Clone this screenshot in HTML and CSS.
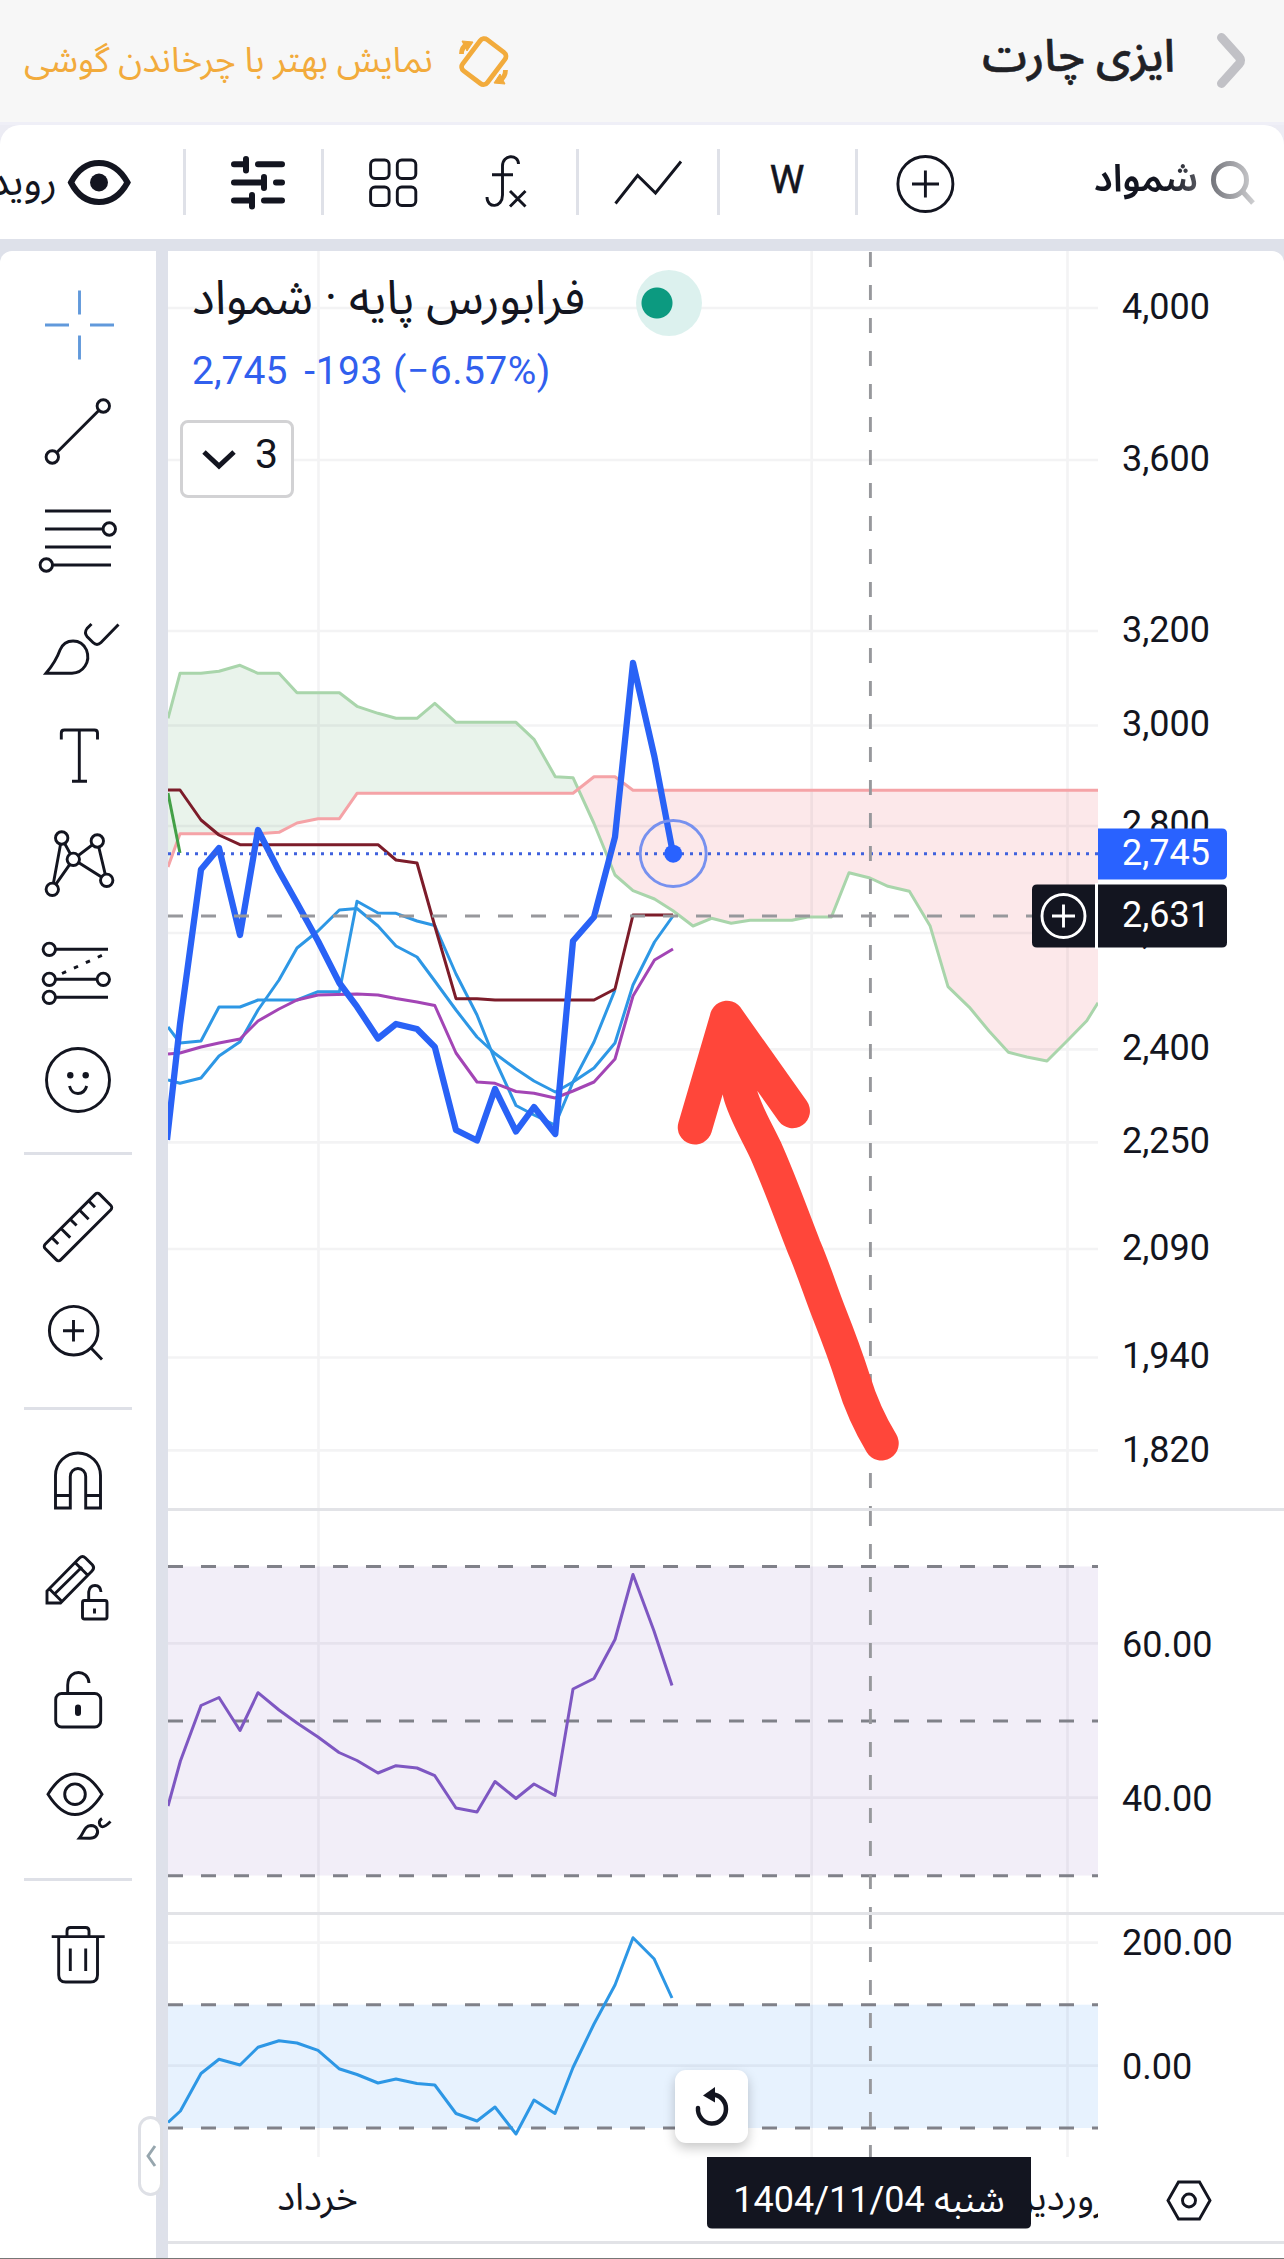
FILE: index.html
```html
<!DOCTYPE html>
<html lang="fa">
<head>
<meta charset="utf-8">
<title>ایزی چارت</title>
<link rel="stylesheet" href="styles.css">
</head>
<body>
<div class="app">
  <header class="header">
    <div class="rotate-hint">
      <span class="rotate-text" dir="rtl">نمایش بهتر با چرخاندن گوشی</span>
      <svg class="rotate-icon" viewBox="459 36 50 52"><rect x="468" y="42" width="31" height="39" rx="5" transform="rotate(37 483.500 62)"/><path d="M461.500 54Q461.500 47 467.500 44M505.500 70Q505.500 77 499.500 81"/><path class="solid" d="M462 41L473 42L467 51ZM505 84L494 83L500 74Z"/></svg>
    </div>
    <div class="page-title">
      <h1 dir="rtl">ایزی چارت</h1>
      <svg class="back" viewBox="1210 30 40 64"><path d="M1220.500 38.500L1238 58Q1241 61.500 1238 65L1220.500 84.500"/></svg>
    </div>
  </header>

  <div class="toolbar-wrap">
  <nav class="toolbar">
    <div class="cell events"><span class="events-text" dir="rtl">رویداد</span><svg viewBox="66 157 66 51"><path class="w6" d="M71 182.500C78 169 88 163 99 163S120 169 127.500 182.500C120 196 110 202 99 202S78 196 71 182.500Z"/><circle class="dot" cx="99" cy="182.500" r="9"/></svg></div>
    <i class="sep"></i>
    <div class="cell"><svg width="135" height="114" viewBox="186 125 135 114"><path class="w6" d="M234 164.300H246M246 159V170.500M258 164.300H282M234 182.500H264M264 177V188M276 182.500H282M234 200.500H252M252 195V206.500M264 200.500H282"/></svg></div>
    <i class="sep"></i>
    <div class="cell"><svg width="252" height="114" viewBox="324 125 252 114"><rect x="370.600" y="160" width="18.500" height="18.500" rx="4.500"/><rect x="397.300" y="160" width="18.500" height="18.500" rx="4.500"/><rect x="370.600" y="187" width="18.500" height="18.500" rx="4.500"/><rect x="397.300" y="187" width="18.500" height="18.500" rx="4.500"/><path d="M518.500 164C518.500 154 502.500 154 502.500 166V195C502.500 208 487 209 487 197M492 174.700H513M510 191L525.500 206.500M525.500 191L510 206.500"/></svg></div>
    <i class="sep"></i>
    <div class="cell"><svg width="138" height="114" viewBox="579 125 138 114"><path d="M615.500 203.500L637.600 175.500L655.500 193L681 161.500"/></svg></div>
    <i class="sep"></i>
    <div class="cell interval">W</div>
    <i class="sep"></i>
    <div class="cell search">
      <svg width="136" height="114" viewBox="858 125 136 114"><circle cx="925.400" cy="184" r="27.500"/><path d="M912 184H939M925.400 170.500V197.500"/></svg>
      <div class="symbol"><span dir="rtl">شمواد</span><svg class="lens" width="44" height="50" viewBox="1211 157 44 50"><circle cx="1230" cy="180" r="16.500"/><path d="M1243 192L1253 203"/></svg></div>
    </div>
  </nav>
  </div>

  <main class="workspace">
    <aside class="tools">
      <svg height="126" viewBox="0 251 156 126"><path class="active" d="M79.500 290.500V314.500M79.500 335.500V359.500M45 325H69M90 325H114"/></svg>
      <svg height="110" viewBox="0 377 156 110"><path d="M52.300 457L103.300 406"/><circle class="node" cx="52.300" cy="457" r="6.200"/><circle class="node" cx="103.300" cy="406" r="6.200"/></svg>
      <svg height="108" viewBox="0 487 156 108"><path d="M45 511H111M45 529H103M45 547H111M52 565H111"/><circle class="node" cx="109.300" cy="529" r="6.200"/><circle class="node" cx="46.300" cy="565" r="6.200"/></svg>
      <svg height="105" viewBox="0 595 156 105"><path d="M46 673.300C53 665 57.500 657 60 650C65 638 81 638 86.500 650C91 662 83 673 72 673.300ZM91.500 624L87 628.500Q84 632.500 87 636.500L93 642.500Q97 646.500 101 642.500L118.500 624.500"/></svg>
      <svg height="110" viewBox="0 700 156 110"><path d="M61.300 739.500V733Q61.300 730 64.300 730H94.500Q97.500 730 97.500 733V739.500M79.300 730V781M72 781.300H87"/></svg>
      <svg height="110" viewBox="0 810 156 110"><path d="M73.300 859.300L61.700 838L52.300 889.300L73.300 859.300L97.300 841L106.700 880.300Z"/><circle class="node" cx="61.700" cy="838" r="6.200"/><circle class="node" cx="97.300" cy="841" r="6.200"/><circle class="node" cx="73.300" cy="859.300" r="6.200"/><circle class="node" cx="52.300" cy="889.300" r="6.200"/><circle class="node" cx="106.700" cy="880.300" r="6.200"/></svg>
      <svg height="108" viewBox="0 920 156 108"><path d="M49 949.300H108M49 979.300H103M49 997.300H108"/><path stroke-dasharray="4.500 8.600" d="M62 973.500L105 954"/><circle class="node" cx="49.300" cy="949.300" r="6.200"/><circle class="node" cx="49.300" cy="979.300" r="6.200"/><circle class="node" cx="103.300" cy="979.300" r="6.200"/><circle class="node" cx="49.300" cy="997.300" r="6.200"/></svg>
      <svg height="102" viewBox="0 1028 156 102"><circle cx="78" cy="1080" r="31.500"/><circle class="dot" cx="70.300" cy="1075.300" r="3.200"/><circle class="dot" cx="85.700" cy="1075.300" r="3.200"/><path d="M69.500 1086Q71.500 1093.500 78 1093.500T86.700 1086"/></svg>
      <hr>
      <svg height="115" viewBox="0 1170 156 115"><g transform="translate(78 1227) rotate(-45)"><rect x="-38.500" y="-11" width="77" height="22" rx="3"/><path d="M-26-11V-2M-13-11V2M0-11V-2M13-11V2M26-11V-2"/></g></svg>
      <svg height="100" viewBox="0 1285 156 100"><circle cx="73.700" cy="1330.700" r="24.300"/><path d="M91 1348L102 1359.500M63 1330.700H84M73.500 1320V1341.500"/></svg>
      <hr>
      <svg height="105" viewBox="0 1425 156 105"><path d="M55.500 1508V1475.500A22.500 22.500 0 0 1 100.500 1475.500V1508H85.700V1476.500A7.700 8 0 0 0 70.300 1476.500V1508ZM55.500 1495.500H70.300M85.700 1495.500H100.500"/></svg>
      <svg height="110" viewBox="0 1530 156 110"><path d="M47 1603V1591L79.500 1558Q82.500 1555 85.500 1558L92.500 1565Q95 1568 92 1571L60.500 1603ZM49 1588.500L62 1601.500M54.500 1594L82 1567M75 1562.500L87.500 1575"/><rect x="82.500" y="1600.500" width="24.500" height="18.500" rx="2"/><path d="M88.700 1600V1592Q89.500 1585.500 95 1585.500Q100.500 1585.500 101 1592M94.500 1608.500V1613.500"/></svg>
      <svg height="110" viewBox="0 1640 156 110"><rect x="55.700" y="1693.500" width="45" height="33.500" rx="6"/><path d="M67.700 1693V1685C68 1675.500 74 1672.500 78.500 1672.500S88.500 1675.500 89 1683"/><rect class="dot" x="75" y="1704.500" width="6" height="11.500" rx="3"/></svg>
      <svg height="106" viewBox="0 1750 156 106"><path d="M48 1794.200C56 1781 66 1774 75 1774S94 1781 102 1794.200C94 1807 84 1814.500 75 1814.500S56 1807 48 1794.200Z"/><circle cx="75" cy="1794.200" r="10.300"/><path d="M79.500 1838C84 1833 84 1826 91 1825.500C97 1825.500 99.500 1832 96 1836Q94 1838.200 90 1838.200ZM102 1818.500C98 1821 99 1825 101.500 1826.500Q104 1828 110.500 1821.500"/></svg>
      <hr>
      <svg height="104" viewBox="0 1896 156 104"><path d="M51.700 1936.600H104.700M67 1936V1931Q67 1927.500 70.500 1927.500H85.500Q89 1927.500 89 1931V1936M58.700 1937V1975Q58.700 1982 65.700 1982H90.500Q97.500 1982 97.500 1975V1937M70.300 1948.500V1971M85.700 1948.500V1971"/></svg>
      <div class="collapse"><svg width="12" height="24" viewBox="0 0 12 24"><path d="M10 2L3 12L10 22"/></svg></div>
    </aside>

    <section class="chart">
      <svg class="pane" height="1257" viewBox="168 251 1116 1257">
        <clipPath id="plot"><rect x="168" y="251" width="930" height="1257"/></clipPath>
        <g clip-path="url(#plot)">
          <path class="cloud-up" d="M168 718.300L180 673.300L201 673.300L219 671.300L240 665.300L258 673.300L279 673.300L297 692.700L339.400 692.700L357 706.300L378 713.300L396 718.300L417 718.300L434.800 703.300L456 722.300L516 722.300L534 739.300L555.300 776.700L573 777.700L578 789L573 793.300L357 793.300L339.400 818.700L318 818.700L297 823L279 832.300L258 833.700L180 833.700L168 867Z"/>
          <path class="cloud-down" d="M578 789L594 776.700L615 776.700L633 790.300H1098V1002.700L1086.800 1020.700L1068 1040L1047 1061L1026.900 1057L1008.400 1052.300L989 1031L969.400 1007.300L948 986.700L930 925.700L909.400 891.300L888 886.300L870 878L849 872.700L831.400 917H807.600L792 920.300H750L731.200 923.300L711.500 918.300L693 926L673 910.700L654.500 899L633 890.700L615 875L594 823.500Z"/>
          <path class="grid" d="M168 308H1098M168 460H1098M168 631H1098M168 725.500H1098M168 826H1098M168 933H1098M168 1049.300H1098M168 1142.300H1098M168 1249H1098M168 1357.500H1098M168 1450.300H1098M318.500 251V1508M811.700 251V1508M1067.500 251V1508"/>
          <path class="line span-a" d="M168 718.300L180 673.300L201 673.300L219 671.300L240 665.300L258 673.300L279 673.300L297 692.700L339.400 692.700L357 706.300L378 713.300L396 718.300L417 718.300L434.800 703.300L456 722.300L516 722.300L534 739.300L555.300 776.700L573 777.700L594 823.500L615 875L633 890.700L654.500 899L673 910.700L693 926L711.500 918.300L731.200 923.300L750 920.300H792L807.600 917H831.400L849 872.700L870 878L888 886.300L909.400 891.300L930 925.700L948 986.700L969.400 1007.300L989 1031L1008.400 1052.300L1026.900 1057L1047 1061L1068 1040L1086.800 1020.700L1098 1002.700"/>
          <path class="line span-b" d="M168 867L180 833.700H258L279 832.300L297 823L318 818.700H339.400L357 793.300H573L594 776.700H615L633 790.300H1098"/>
          <path class="line lagging" d="M168 793L180 853"/>
          <path class="line sky" d="M168 1027L180 1043L201 1041L219 1007H240L258 1000H297L318 991.700H339.400L357 901.300L378 913L396 913.300L417 921L434.800 925.500L456 974L477 1015L495 1060L516 1105.500L534 1115L555 1125L573 1082L594 1042L615 990"/>
          <path class="line sky" d="M168 1080L180 1083.300L201 1078L219 1056L240 1041.700L258 1010L279 980L297 948L318 931L339.400 910L357 908.500L378 926L396 946L417 957L434.800 981L456 1010L477 1037L495 1053.500L516 1069L534 1081L555.300 1092L573 1082L594 1068L615 1043L633 985L654.500 942L673 916"/>
          <path class="line maroon" d="M168 790H180L201 820L219 835L240 844.700H378L396 860L417 863L434.800 926L456 998.700H477L495 1000H594L615 989L633 915H673"/>
          <path class="line violet" d="M168 1054L180 1053L201 1047L219 1043L240 1039L258 1021L279 1009L297 1000L318 995L357 994L378 995L396 998.500L417 1002L434.800 1005.500L456 1053L477 1082L495 1083.300L516 1091.500L534 1093.300L555 1098L573 1091L594 1082L615 1059L633 996L654.500 960L673 949"/>
          <path class="line price" d="M167 1140L180 1024L201 869.500L219 848L240 935L258 830L279 871L297 903L318 941L339.400 983L357 1006.700L378 1038.500L396 1024L417 1029L434.800 1047L456 1130L477 1140.500L495 1089L516 1131.500L534 1107L555.300 1134L573 941L594 917L615 837L633 663L654.500 757L673 853.700"/>
          <path class="last-price" d="M168 853.700H1098"/>
          <circle class="halo" cx="673.200" cy="853.500" r="33"/><circle class="last-dot" cx="673.200" cy="853.700" r="9"/>
          <path class="cross" d="M168 916H1098M870.400 252V1508"/>
          <path class="arrow" d="M881.500 1443.300C868 1421 860 1402 853.300 1380C846 1357 838.500 1337 829 1313C820 1290 813.500 1269 804 1247C791 1214 781 1185 765.500 1150C756 1130 744 1110 740 1093C736 1072 729 1040 727 1018M695 1127.300L727 1018.300L792.700 1111"/>
        </g>
        <g class="labels">
          <text x="1122" y="318.500">4,000</text><text x="1122" y="471">3,600</text><text x="1122" y="642">3,200</text><text x="1122" y="736">3,000</text><text x="1122" y="836">2,800</text><text x="1122" y="944">2,600</text><text x="1122" y="1060">2,400</text><text x="1122" y="1153">2,250</text><text x="1122" y="1260">2,090</text><text x="1122" y="1368">1,940</text><text x="1122" y="1461.500">1,820</text>
          <path class="tag-blue" d="M1098 828.500H1222Q1227 828.500 1227 833.500V874.500Q1227 879.500 1222 879.500H1098Z"/>
          <path class="tag-gap" d="M1095 883H1099V949H1095Z"/>
          <path class="tag-dark" d="M1098 884.500H1222Q1227 884.500 1227 889.500V942.500Q1227 947.500 1222 947.500H1098ZM1095 884.500H1037Q1032 884.500 1032 889.500V942.500Q1032 947.500 1037 947.500H1095Z"/>
          <text class="inv" x="1122" y="864.500">2,745</text><text class="inv" x="1122" y="927">2,631</text>
          <g class="plus"><circle cx="1063.500" cy="916" r="21.500"/><path d="M1052 916H1075M1063.500 904.500V927.500"/></g>
        </g>
      </svg>
      <i class="rule"></i>
      <svg class="pane" height="401" viewBox="168 1511 1116 401">
        <rect class="band-violet" x="168" y="1566.500" width="930" height="309"/>
        <path class="grid" d="M168 1643.300H1098M168 1797.700H1098M318.500 1511V1912M811.700 1511V1912M1067.500 1511V1912"/>
        <path class="level" d="M168 1566.500H1098M168 1721H1098M168 1875.700H1098"/>
        <path class="line rsi" d="M168 1806L180.400 1761L201 1705.500L219 1697.500L240 1730.500L258 1692.700L279 1710L297 1723L318 1737L339 1752.500L357 1760.500L378 1773L396 1765.700L417 1768L434.800 1775.700L456 1808L477 1812L495 1781.500L516 1798.500L534 1784L555 1795.500L573 1689L594 1678.500L615 1639.500L633 1574.500L654 1631L672 1685.500"/>
        <path class="cross" d="M870.400 1511V1912"/>
        <g class="labels"><text x="1122" y="1657">60.00</text><text x="1122" y="1811">40.00</text></g>
      </svg>
      <i class="rule"></i>
      <svg class="pane" height="242" viewBox="168 1915 1116 242">
        <rect class="band-blue" x="168" y="2004.700" width="930" height="123.300"/>
        <path class="grid" d="M168 1942.700H1098M168 2065.700H1098M318.500 1915V2157M811.700 1915V2157M1067.500 1915V2157"/>
        <path class="level" d="M168 2004.700H1098M168 2128H1098"/>
        <path class="line cci" d="M168 2122.500L180.400 2111L201 2073.500L219 2059.300L240 2065L258 2047.300L279 2040.700L297 2043L318 2050.300L339 2068.700L357 2074.500L378 2083L396 2079L417 2083.500L434.800 2085L456 2113.500L477 2121L495 2107L516 2134L534 2100L555 2113.500L573 2067.500L594 2024L615 1985L633 1937.700L654 1958.700L672 1998"/>
        <path class="cross" d="M870.400 1914V2157"/>
        <g class="labels"><text x="1122" y="1955">200.00</text><text x="1122" y="2079">0.00</text></g>
      </svg>
      <svg class="pane" height="84" viewBox="168 2157 1116 84">
        <clipPath id="axis"><rect x="168" y="2157" width="930" height="84"/></clipPath>
        <g class="dates" clip-path="url(#axis)"><text x="317.500" y="2210">خرداد</text><text x="1067" y="2210">فروردین</text>
        <path class="tag-dark" d="M707 2157H1031V2223.500Q1031 2228.500 1026 2228.500H712Q707 2228.500 707 2223.500Z"/>
        <text class="inv num" x="829" y="2212">1404/11/04</text><text class="inv num" x="969.500" y="2212">شنبه</text></g>
        <path class="hex" d="M1168 2200.500L1178.500 2182H1199.500L1210 2200.500L1199.500 2219H1178.500Z"/><circle class="hex" cx="1189" cy="2200.500" r="6.500"/>
      </svg>
      <i class="rule"></i>

      <div class="legend">
        <div class="legend-title"><span dir="rtl">فرابورس پایه · شمواد</span><i class="status"></i></div>
        <div class="legend-values"><span>2,745</span><span class="change">-193 (−6.57%)</span></div>
        <div class="legend-toggle"><svg width="36" height="22" viewBox="0 0 36 22"><path d="M3 3L18 17L33 3"/></svg>3</div>
      </div>
      <div class="reset"><svg width="36" height="44" viewBox="693 2086 36 44"><path d="M697 2109A14 14.500 0 1 0 711 2095.500H709"/><path class="dot" d="M702 2096.500L714 2088V2103.500Z"/></svg></div>
    </section>
  </main>
</div>
</body>
</html>
```
FILE: styles.css
```css
* { box-sizing: border-box; }
body {
  margin: 0;
  background: #fff;
  font-family: Roboto, "Noto Sans Arabic", "DejaVu Sans", sans-serif;
  color: #131520;
}
svg { display: block; fill: none; stroke: #131520; stroke-width: 2.9; flex: none; }
svg text { stroke: none; fill: #131520; }
.dot { fill: #131520; stroke: none; }
.node { fill: #fff; }

.app {
  width: 1284px;
  height: 2259px;
  overflow: hidden;
  display: flex;
  flex-direction: column;
  border-bottom: 1px solid #777;
  background: #dee1ea;
}

.header {
  height: 125px;
  padding: 0 33px 0 24px;
  display: flex;
  justify-content: space-between;
  background: #f7f7f7;
  border-bottom: 3px solid #efeff7;
}
.rotate-hint { display: flex; align-items: center; gap: 26px; color: #f2ab3c; }
.rotate-text { font-size: 35.500px; white-space: nowrap; margin-top: -2px; }
.rotate-icon { width: 50px; height: 52px; margin-top: 2px; stroke: #f2ab3c; stroke-width: 4.800; }
.rotate-icon .solid { fill: #f2ab3c; stroke-width: 1; }
.page-title { display: flex; align-items: center; gap: 36px; }
.page-title h1 {
  margin: -10px 0 0;
  font-size: 45px; font-weight: 500; white-space: nowrap;
  color: #202126; -webkit-text-stroke: .6px #202126;
}
.back { width: 40px; height: 64px; stroke: #c1c1c6; stroke-width: 9; stroke-linecap: round; }

.toolbar-wrap { background: #ececf4; }
.toolbar {
  height: 114px;
  display: grid;
  grid-template-columns: 183px 3px 135px 3px 252px 3px 138px 3px 135px 3px 1fr;
  align-items: center;
  background: #fff;
  border-radius: 20px 20px 0 0;
}
.cell { height: 114px; display: flex; align-items: center; justify-content: center; overflow: hidden; }
.sep { height: 66px; background: #dfe1e8; }
.w6 { stroke-width: 6; stroke-linecap: round; }
.events { justify-content: flex-end; gap: 9px; padding-right: 51px; }
.events svg { width: 66px; height: 51px; }
.events-text { font-size: 41px; white-space: nowrap; }
.interval { font-size: 39px; -webkit-text-stroke: .5px #131520; padding: 0 1px 4px 0; }
.search { justify-content: space-between; padding-right: 29px; }
.symbol {
  display: flex; align-items: center; gap: 13px;
  font-size: 37.800px; font-weight: 600;
  -webkit-mask-image: linear-gradient(90deg, #000 45%, rgba(0,0,0,.2));
  mask-image: linear-gradient(90deg, #000 45%, rgba(0,0,0,.2));
}
.symbol span { margin-top: -6px; }
.lens { stroke-width: 5; }

.workspace { margin-top: 12px; height: 2007px; display: flex; gap: 12px; }
.tools { position: relative; width: 156px; background: #fff; border-top-left-radius: 12px; }
.tools > svg { width: 156px; }
.tools hr { width: 108px; height: 3px; margin: 22px 24px 15px; border: 0; background: #dee0e7; }
.tools .active { stroke: #6199db; }
.collapse {
  position: absolute; left: 138px; top: 1865px; z-index: 2;
  width: 25px; height: 80px;
  display: flex; align-items: center; justify-content: center;
  background: #fff; border: 3px solid #dee0e6; border-radius: 13px;
}
.collapse svg { stroke: #97a6ae; }

.chart { position: relative; flex: 1; background: #fff; border-top-right-radius: 12px; overflow: hidden; }
.pane { width: 1116px; }
.rule { display: block; height: 3px; background: #e2e3e7; }
.grid { stroke: rgba(40, 42, 60, .055); stroke-width: 2.7; }
.cloud-up { fill: #e9f3eb; stroke: none; }
.cloud-down { fill: #fce8ea; stroke: none; }
.line { stroke-width: 3; stroke-linejoin: round; }
.span-a { stroke: #a9d5ab; }
.span-b { stroke: #f5a3a7; }
.lagging { stroke: #43a047; }
.sky { stroke: #2d97e5; }
.maroon { stroke: #7c1c2a; }
.violet { stroke: #a345b5; }
.price { stroke: #2962f6; stroke-width: 6.3; }
.last-price { stroke: #3f61dd; stroke-dasharray: 3 6; }
.halo { stroke: #7791ef; }
.last-dot { fill: #2962ff; stroke: none; }
.cross { stroke: #97989c; stroke-dasharray: 15 18; }
.level { stroke: #808189; stroke-width: 3; stroke-dasharray: 15 18; }
.arrow { stroke: #ff463a; stroke-width: 34.500; stroke-linecap: round; stroke-linejoin: round; }
.band-violet { fill: #f2eef8; stroke: none; }
.band-blue { fill: #e7f2fe; stroke: none; }
.rsi { stroke: #7e57c2; }
.cci { stroke: #2d97e5; }
.labels text { font-size: 36px; }
.dates text { font-size: 37.500px; text-anchor: middle; }
.dates text.num { font-size: 36px; }
svg text.inv { fill: #fff; }
.tag-blue { fill: #2962ff; stroke: none; }
.tag-dark { fill: #131520; stroke: none; }
.tag-gap { fill: #fff; stroke: none; }
.plus { stroke: #fff; }

.legend { position: absolute; left: 12px; top: 12px; display: flex; flex-direction: column; align-items: flex-start; }
.legend-title { height: 74px; padding-left: 12px; display: flex; align-items: center; gap: 51px; font-size: 47.500px; line-height: 60px; white-space: nowrap; }
.legend-title span { margin-top: -4px; }
.status { width: 66px; height: 66px; margin-top: 5px; border-radius: 50%; background: radial-gradient(circle at 21px 33px, #0c9a80 15px, #dcf1ee 16px); }
.legend-values { height: 83px; padding: 11px 0 0 12px; display: flex; gap: 17px; font-size: 39px; color: #315fee; }
.legend-values .change { letter-spacing: .5px; }
.legend-toggle {
  width: 114px; height: 78px; padding: 0 13px 11px 18px;
  display: flex; align-items: center; justify-content: space-between;
  border: 3px solid #d2d2d4; border-radius: 8px; background: #fff; font-size: 41px;
}
.legend-toggle svg { stroke-width: 5; margin-top: 12px; }

.reset {
  position: absolute; left: 507px; top: 1819px; width: 73px; height: 73px;
  display: flex; align-items: center; justify-content: center;
  background: #fff; border-radius: 11px; box-shadow: 0 5px 12px rgba(0,0,0,.22);
}
.reset svg { stroke-width: 4.500; stroke-linecap: round; }
```
